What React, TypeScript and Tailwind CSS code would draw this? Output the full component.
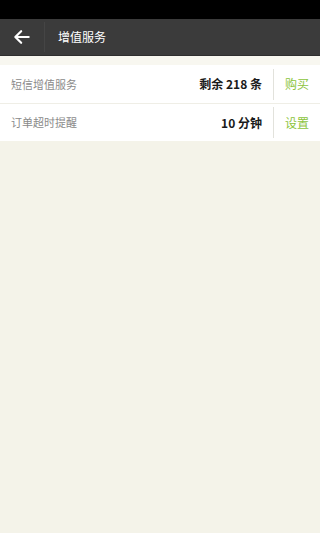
import React from 'react';

const rows = [
  { label: '短信增值服务', value: '剩余 218 条', action: '购买' },
  { label: '订单超时提醒', value: '10 分钟', action: '设置' },
];

export default function App() {
  return (
    <div
      className="w-[320px] h-[533px] bg-[#f4f3e9] flex flex-col"
      style={{ fontFamily: '"Noto Sans CJK SC", "Noto Sans", sans-serif' }}
    >
      {/* status bar */}
      <div className="h-[19px] bg-black shrink-0" />

      {/* header */}
      <div className="h-[37px] bg-[#3b3b3b] flex items-stretch shrink-0 border-b border-[#2e2e2e]">
        <div className="w-[44px] flex items-center justify-center">
          <svg width="20" height="20" viewBox="0 0 24 24" fill="none" stroke="#ffffff" strokeWidth="2.6" strokeLinecap="round" strokeLinejoin="round">
            <path d="M20 12H5" />
            <path d="M11 5l-7 7 7 7" />
          </svg>
        </div>
        <div className="w-px my-[3px] bg-[#2f2f2f] border-r border-[#454545]" />
        <div className="flex items-center pl-[13px] text-[12px] text-white">增值服务</div>
      </div>

      <div className="h-[9px] bg-[#f8f7f0] shrink-0" />

      {/* rows */}
      <div className="flex flex-col">
        {rows.map((r, i) => (
          <div
            key={r.label}
            className={`h-[38px] bg-white flex items-center ${i > 0 ? 'border-t border-[#efeee6]' : ''}`}
          >
            <span className="pl-[11px] text-[11px] text-[#8a8a8a] flex-1">{r.label}</span>
            <span className="text-[12px] font-bold text-[#1a1a1a] pr-[11px]">{r.value}</span>
            <div className="w-px h-[31px] bg-[#e2e2dc]" />
            <span className="w-[46px] text-center text-[12px] text-[#8cc43c]">{r.action}</span>
          </div>
        ))}
      </div>
    </div>
  );
}
